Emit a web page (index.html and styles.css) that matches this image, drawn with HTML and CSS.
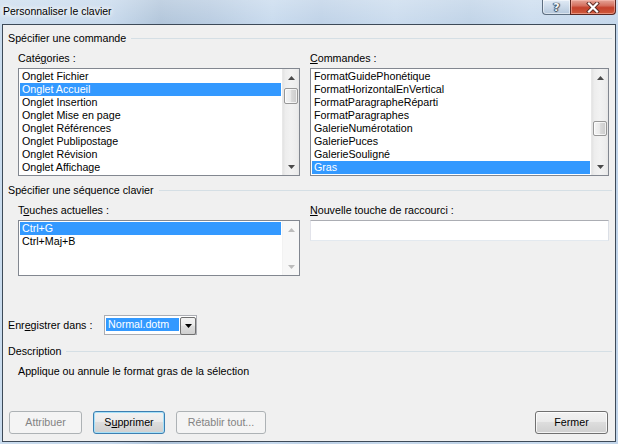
FILE: index.html
```html
<!DOCTYPE html>
<html lang="fr">
<head>
<meta charset="utf-8">
<title>Personnaliser le clavier</title>
<link rel="stylesheet" href="styles.css">
</head>
<body>
<div class="window">
  <div class="titlebar">
    <span class="title">Personnaliser le clavier</span>
    <div class="caption-buttons">
      <div class="cap-btn help"><span class="help-glyph">?</span></div>
      <div class="cap-btn close">
        <svg width="14" height="11" viewBox="0 0 14 11">
          <path d="M3 1.5 L11 9.5 M11 1.5 L3 9.5" stroke="#5b2a24" stroke-width="4" stroke-linecap="square" fill="none"/>
          <path d="M3 1.5 L11 9.5 M11 1.5 L3 9.5" stroke="#ffffff" stroke-width="2.2" stroke-linecap="square" fill="none"/>
        </svg>
      </div>
    </div>
  </div>

  <div class="client">
    <div class="group-head"><span>Spécifier une commande</span></div>

    <div class="two-col">
      <div class="col">
        <div class="label">Caté<u>g</u>ories :</div>
        <div class="listbox list-tall">
          <ul class="items">
            <li>Onglet Fichier</li>
            <li class="sel">Onglet Accueil</li>
            <li>Onglet Insertion</li>
            <li>Onglet Mise en page</li>
            <li>Onglet Références</li>
            <li>Onglet Publipostage</li>
            <li>Onglet Révision</li>
            <li>Onglet Affichage</li>
          </ul>
          <div class="scrollbar">
            <div class="sb-btn"><svg width="7" height="4" viewBox="0 0 7 4"><path d="M0 4 L3.5 0 L7 4 Z" fill="#4a4a4a"/></svg></div>
            <div class="sb-track"><div class="thumb thumb-top"></div></div>
            <div class="sb-btn"><svg width="7" height="4" viewBox="0 0 7 4"><path d="M0 0 L7 0 L3.5 4 Z" fill="#4a4a4a"/></svg></div>
          </div>
        </div>
      </div>
      <div class="col">
        <div class="label"><u>C</u>ommandes :</div>
        <div class="listbox list-tall">
          <ul class="items">
            <li>FormatGuidePhonétique</li>
            <li>FormatHorizontalEnVertical</li>
            <li>FormatParagrapheRéparti</li>
            <li>FormatParagraphes</li>
            <li>GalerieNumérotation</li>
            <li>GaleriePuces</li>
            <li>GalerieSouligné</li>
            <li class="sel">Gras</li>
          </ul>
          <div class="scrollbar">
            <div class="sb-btn"><svg width="7" height="4" viewBox="0 0 7 4"><path d="M0 4 L3.5 0 L7 4 Z" fill="#4a4a4a"/></svg></div>
            <div class="sb-track"><div class="thumb thumb-mid"></div></div>
            <div class="sb-btn"><svg width="7" height="4" viewBox="0 0 7 4"><path d="M0 0 L7 0 L3.5 4 Z" fill="#4a4a4a"/></svg></div>
          </div>
        </div>
      </div>
    </div>

    <div class="group-head head-2"><span>Spécifier une séquence clavier</span></div>

    <div class="two-col">
      <div class="col">
        <div class="label">T<u>o</u>uches actuelles :</div>
        <div class="listbox list-short">
          <ul class="items">
            <li class="sel">Ctrl+G</li>
            <li>Ctrl+Maj+B</li>
          </ul>
          <div class="scrollbar disabled">
            <div class="sb-btn"><svg width="7" height="4" viewBox="0 0 7 4"><path d="M0 4 L3.5 0 L7 4 Z" fill="#bcbcbc"/></svg></div>
            <div class="sb-track"></div>
            <div class="sb-btn"><svg width="7" height="4" viewBox="0 0 7 4"><path d="M0 0 L7 0 L3.5 4 Z" fill="#bcbcbc"/></svg></div>
          </div>
        </div>
      </div>
      <div class="col">
        <div class="label"><u>N</u>ouvelle touche de raccourci :</div>
        <div class="textbox"></div>
      </div>
    </div>

    <div class="save-row">
      <span class="save-label">Enr<u>e</u>gistrer dans :</span>
      <div class="combo">
        <span class="combo-text">Normal.dotm</span>
        <span class="combo-btn"><svg width="7" height="4" viewBox="0 0 7 4"><path d="M0 0 L7 0 L3.5 4 Z" fill="#000"/></svg></span>
      </div>
    </div>

    <div class="group-head head-desc"><span>Description</span></div>
    <div class="desc">Applique ou annule le format gras de la sélection</div>

    <div class="buttons">
      <div class="btn disabled btn-assign">Attribuer</div>
      <div class="btn default btn-remove">S<u>u</u>pprimer</div>
      <div class="btn disabled btn-reset">Rétablir tout...</div>
      <div class="btn btn-close">Fermer</div>
    </div>
  </div>
</div>
</body>
</html>
```

FILE: styles.css
```css
* { box-sizing: border-box; }

html, body {
  margin: 0;
  padding: 0;
}

body {
  width: 618px;
  height: 444px;
  overflow: hidden;
  font-family: "Liberation Sans", Arial, sans-serif;
  font-size: 10.7px;
  line-height: 13px;
  color: #000;
  background:
    linear-gradient(to bottom, rgba(255,255,255,0.25), rgba(255,255,255,0) 30px),
    linear-gradient(to right, #cadcee 0, #c4d7eb 18%, #aec3d9 26%, #b6cae0 34%, #c6d9ed 44%, #bcd0e6 52%, #c8daed 64%, #bdd1e6 76%, #c9dbee 86%, #c2d5ea 100%);
}

.window {
  display: flex;
  flex-direction: column;
  height: 444px;
  padding: 0 2px 2px 2px;
}

/* ---------- title bar ---------- */
.titlebar {
  height: 24px;
  flex: none;
  display: flex;
  justify-content: space-between;
  align-items: flex-start;
}

.title {
  padding: 5px 0 0 1px;
  font-size: 10.5px;
  line-height: 13px;
  color: #000;
  text-shadow: 0 0 4px #fff, 0 0 6px #fff, 0 0 8px rgba(255,255,255,0.8);
}

.caption-buttons {
  display: flex;
  margin-right: 0;
}

.cap-btn {
  height: 15px;
  display: flex;
  align-items: center;
  justify-content: center;
  border: 1px solid #5d6e80;
  border-top: none;
}

.help {
  width: 28px;
  border-right: none;
  border-radius: 0 0 0 4px;
  background: linear-gradient(to bottom, rgba(230,238,247,0.7), rgba(170,190,212,0.7));
  box-shadow: inset 0 0 0 1px rgba(255,255,255,0.5);
}

.help-glyph {
  font-family: "DejaVu Sans", sans-serif;
  font-size: 11px;
  font-weight: bold;
  line-height: 11px;
  color: #f4f7fb;
  text-shadow: 0 0 1px #35475a, 1px 0 1px #35475a, -1px 0 1px #35475a, 0 1px 1px #35475a;
}

.close {
  width: 46px;
  border-color: #5b2620;
  border-radius: 0 0 4px 0;
  background: linear-gradient(to bottom, #e4a599 0%, #d5705f 40%, #c4412c 55%, #cf5a3c 100%);
  box-shadow: inset 0 0 0 1px rgba(255,200,190,0.5);
}

/* ---------- client area ---------- */
.client {
  flex: 1;
  display: flex;
  flex-direction: column;
  background: #f0f0f0;
  border: 1px solid #3d4a58;
  padding: 7px 6px 7px 5px;
}

.group-head {
  display: flex;
  align-items: center;
  gap: 5px;
  height: 13px;
  margin-right: -3px;
}

.group-head::after {
  content: "";
  flex: 1;
  height: 1px;
  background: #d5dfe5;
}

.head-2 { margin-top: 8px; }
.head-desc { margin-top: 10px; }

.two-col {
  display: grid;
  grid-template-columns: 282px 299px;
  column-gap: 10px;
  margin-left: 10px;
  margin-top: 7px;
}

.label {
  height: 13px;
  margin-bottom: 3px;
}

u { text-decoration-thickness: 1px; text-underline-offset: 1px; }

/* ---------- list boxes ---------- */
.listbox {
  display: flex;
  border: 1px solid #828790;
  background: #fff;
}

.list-tall { height: 108px; }
.list-short { height: 56px; }

.items {
  list-style: none;
  margin: 0;
  padding: 1px;
  flex: 1;
}

.items li {
  height: 13px;
  padding-left: 2px;
  white-space: nowrap;
}

.items li.sel {
  background: #3399ff;
  color: #fff;
}

.scrollbar {
  width: 17px;
  flex: none;
  display: flex;
  flex-direction: column;
  background: linear-gradient(to right, #e3e3e3 0, #ededed 15%, #f2f2f2 50%, #ededed 85%, #e6e6e6 100%);
  border-left: 1px solid #e8e8e8;
}

.scrollbar.disabled {
  background: #f7f7f7;
  border-left-color: #f2f2f2;
}

.sb-btn {
  height: 17px;
  flex: none;
  display: flex;
  align-items: center;
  justify-content: center;
}

.sb-track {
  flex: 1;
}

.thumb {
  height: 16px;
  margin: 0 1px;
  border: 1px solid #979797;
  border-radius: 2px;
  background: linear-gradient(to right, #f4f4f4 0, #eaeaea 45%, #d9d9d9 55%, #cbcbcb 100%);
  box-shadow: inset 0 0 0 1px rgba(255,255,255,0.7);
}

.thumb-top { margin-top: 2px; }
.thumb-mid { margin-top: 35px; height: 15px; }

/* ---------- text box ---------- */
.textbox {
  height: 21px;
  background: #fff;
  border: 1px solid #abadb3;
  border-color: #abadb3 #dbdfe6 #e3e9ef #e2e3ea;
}

/* ---------- save row ---------- */
.save-row {
  display: flex;
  align-items: center;
  margin-top: 39px;
  height: 20px;
}

.save-label {
  width: 96px;
}

.combo {
  display: flex;
  align-items: flex-start;
  width: 93px;
  height: 20px;
  background: #fff;
  border: 1px solid #abadb3;
  padding: 2px 0 0 1px;
}

.combo-text {
  width: 73px;
  height: 13px;
  padding-left: 2px;
  background: #3399ff;
  color: #fff;
}

.combo-btn {
  margin: -1px 0 0 auto;
  width: 16px;
  height: 18px;
  display: flex;
  align-items: center;
  justify-content: center;
  border: 1px solid #707070;
  border-radius: 2px;
  background: linear-gradient(to bottom, #f2f2f2 0, #ebebeb 45%, #dddddd 50%, #cfcfcf 100%);
}

/* ---------- description ---------- */
.desc {
  margin: 7px 0 0 10px;
  height: 13px;
}

/* ---------- buttons ---------- */
.buttons {
  margin-top: auto;
  display: flex;
  align-items: flex-end;
  gap: 11px;
  padding: 0 1px;
}

.btn {
  height: 23px;
  display: flex;
  align-items: center;
  justify-content: center;
  border: 1px solid #707070;
  border-radius: 3px;
  background: linear-gradient(to bottom, #f2f2f2 0, #ebebeb 45%, #dddddd 50%, #cfcfcf 100%);
  box-shadow: inset 0 0 0 1px rgba(255,255,255,0.75);
}

.btn.default {
  border-color: #3c7fb1;
  box-shadow: inset 0 0 0 1px #a6e0f8;
}

.btn.disabled {
  border-color: #adb2b5;
  background: #f4f4f4;
  box-shadow: none;
  color: #838383;
}

.btn-assign { width: 73px; }
.btn-remove { width: 72px; }
.btn-reset { width: 90px; }
.btn-close { width: 73px; margin-left: auto; }
```
